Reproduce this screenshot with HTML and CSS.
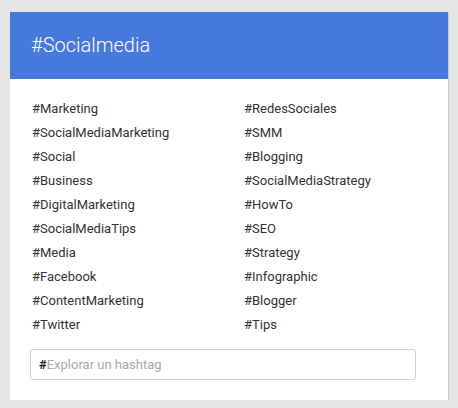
FILE: index.html
```html
<!DOCTYPE html>
<html>
<head>
<meta charset="utf-8">
<link rel="stylesheet" href="styles.css">
</head>
<body>
<div class="card">
  <div class="header">#Socialmedia</div>
  <div class="body">
    <ul class="tags">
      <li>#Marketing</li><li>#RedesSociales</li>
      <li>#SocialMediaMarketing</li><li>#SMM</li>
      <li>#Social</li><li>#Blogging</li>
      <li>#Business</li><li>#SocialMediaStrategy</li>
      <li>#DigitalMarketing</li><li>#HowTo</li>
      <li>#SocialMediaTips</li><li>#SEO</li>
      <li>#Media</li><li>#Strategy</li>
      <li>#Facebook</li><li>#Infographic</li>
      <li>#ContentMarketing</li><li>#Blogger</li>
      <li>#Twitter</li><li>#Tips</li>
    </ul>
    <div class="search">
      <span class="hash">#</span><span class="placeholder">Explorar un hashtag</span>
    </div>
  </div>
</div>
</body>
</html>
```
FILE: styles.css
```css
html, body {
  margin: 0;
  padding: 0;
  background: #e5e5e5;
  font-family: Roboto, "Liberation Sans", sans-serif;
}
body {
  padding: 12px 0 0 10px;
}
.card {
  width: 438px;
  height: 388px;
  background: #fff;
  box-shadow: 1px 1px 1px rgba(0,0,0,0.12);
}
.header {
  height: 67px;
  background: #4679dd;
  color: #fff;
  font-weight: 300;
  font-size: 20px;
  line-height: 66px;
  padding-left: 21px;
  box-sizing: border-box;
}
.body {
  padding: 18px 32px 0 20px;
}
.tags {
  list-style: none;
  margin: 0;
  padding: 0 0 0 2px;
  display: grid;
  grid-template-columns: 212px 1fr;
}
.tags li {
  font-size: 13px;
  line-height: 24px;
  color: #333;
}
.search {
  margin-top: 12px;
  height: 31px;
  border: 1px solid #cfcfcf;
  border-radius: 3px;
  box-sizing: border-box;
  display: flex;
  align-items: center;
  padding-left: 8px;
  font-size: 13px;
}
.hash {
  color: #222;
  font-weight: 700;
  font-size: 13px;
}
.placeholder {
  color: #aaa;
}
```
